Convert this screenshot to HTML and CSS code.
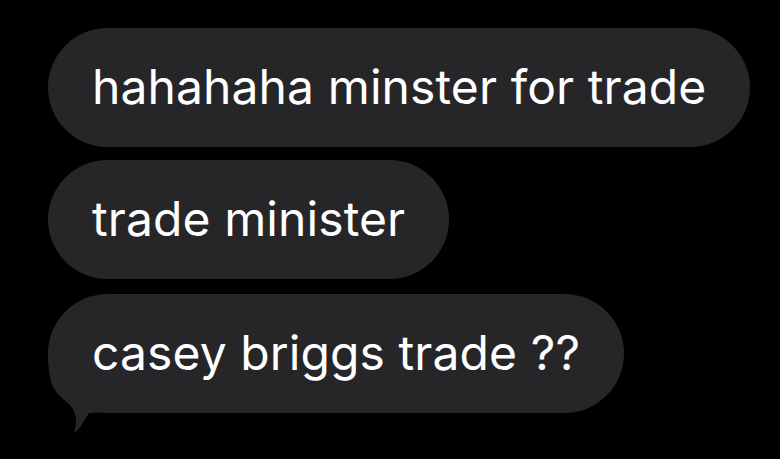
FILE: index.html
```html
<!DOCTYPE html>
<html lang="en">
<head>
<meta charset="utf-8">
<link rel="stylesheet" href="styles.css">
</head>
<body>
<div class="thread">
  <div class="bubble"><span class="text">hahahaha minster for trade</span></div>
  <div class="bubble"><span class="text">trade minister</span></div>
  <div class="bubble bubble-last">
    <svg class="tail" width="80" height="150" viewBox="0 0 80 150" aria-hidden="true">
      <path d="M0 60 C0 70 1 80 3 88 C6 98 14 104 21 110 C28 117 30 127 26 139 C32 136 36 126 41 119 L60 118 L60 60 Z"/>
    </svg>
    <span class="text">casey briggs trade ??</span>
  </div>
</div>
</body>
</html>
```

FILE: styles.css
```css
html, body {
  margin: 0;
  background: #000;
  width: 780px;
  height: 459px;
  overflow: hidden;
}

.thread {
  display: flex;
  flex-direction: column;
  align-items: flex-start;
  gap: 13px;
  padding: 28px 0 0 48px;
}

.bubble {
  position: relative;
  box-sizing: border-box;
  height: 119px;
  display: flex;
  align-items: center;
  padding: 0 44px 2px 44px;
  border-radius: 60px;
  background: #262629;
  color: #fff;
  font-family: Inter, "Noto Sans", sans-serif;
  font-size: 48px;
  letter-spacing: 0.1px;
  white-space: nowrap;
}

.bubble-last {
  margin-top: 2px;
}

.text {
  position: relative;
}

/* speech tail hanging off the lower left of the last bubble */
.tail {
  position: absolute;
  left: 0;
  top: 0;
  overflow: visible;
  fill: #262629;
}
```
